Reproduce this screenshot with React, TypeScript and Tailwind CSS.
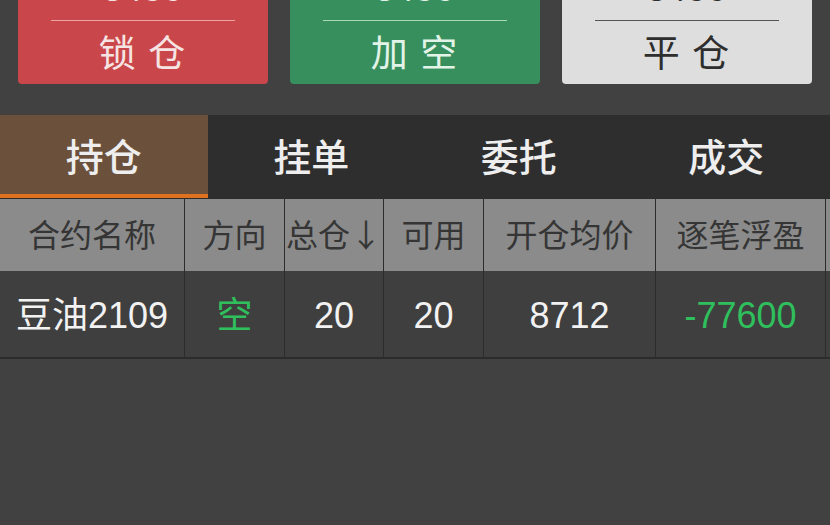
const font = { fontFamily: '"Noto Sans CJK SC", "Noto Sans", sans-serif' };
const numFont = { fontFamily: '"Liberation Sans", "Noto Sans CJK SC", sans-serif' };

const buttons = [
  { num: "3456", label: "锁 仓", bg: "bg-[#c9474a]", fg: "text-[#f6e4e4]", line: "bg-[#eea4a4]" },
  { num: "3456", label: "加 空", bg: "bg-[#388f5e]", fg: "text-[#e2f3e8]", line: "bg-[#a8d8b8]" },
  { num: "3456", label: "平 仓", bg: "bg-[#dedede]", fg: "text-[#2e2e2e]", line: "bg-[#555555]" },
];

const tabs = ["持仓", "挂单", "委托", "成交"];

const cols = [
  { head: "合约名称", w: "w-[185px]", val: "豆油2109", color: "text-[#f2f2f2]" },
  { head: "方向", w: "w-[100px]", val: "空", color: "text-[#2fbf5c]" },
  { head: "总仓↓", w: "w-[99px]", val: "20", color: "text-[#f2f2f2]" },
  { head: "可用", w: "w-[100px]", val: "20", color: "text-[#f2f2f2]" },
  { head: "开仓均价", w: "w-[172px]", val: "8712", color: "text-[#f2f2f2]" },
  { head: "逐笔浮盈", w: "w-[170px]", val: "-77600", color: "text-[#2fbf5c]" },
];

export default function App() {
  return (
    <div className="w-[830px] h-[525px] overflow-hidden bg-[#414141]" style={font}>
      <div className="flex gap-[22px] px-[18px] -mt-[40px]">
        {buttons.map((b, i) => (
          <div key={i} className={`w-[250px] h-[124px] rounded-[4px] ${b.bg} ${b.fg} flex flex-col items-center`}>
            <div className="h-[60px] flex items-end text-[34px] leading-none tracking-[1px] pb-[14px]" style={numFont}>
              {b.num}
            </div>
            <div className={`w-[184px] h-px ${b.line}`} />
            <div className="flex-1 flex items-center justify-center text-[37px] leading-none tracking-[2px] pb-[2px]">
              {b.label}
            </div>
          </div>
        ))}
      </div>

      <div className="mt-[31px] flex h-[83px] bg-[#2e2e2e]">
        {tabs.map((t, i) => (
          <div
            key={t}
            className={`flex-1 flex items-center justify-center text-[38px] font-medium text-[#eeeeee] border-b-[4px] ${
              i === 0 ? "bg-[#6b503b] border-[#e0711f]" : "border-[#2e2e2e]"
            }`}
          >
            {t}
          </div>
        ))}
      </div>

      <div className="flex">
        {cols.map((c, i) => (
          <div key={i} className={`${c.w} shrink-0 flex flex-col border-r border-[#2c2c2c]`}>
            <div className="h-[73px] flex items-center justify-center bg-[#8b8b8b] text-[#353535] text-[32px] leading-none border-t border-[#2c2c2c] pb-[4px]">
              {c.head}
            </div>
            <div
              className={`h-[88px] flex items-center justify-center bg-[#3f3f3f] text-[36px] leading-none ${c.color} border-b-2 border-[#2c2c2c] pt-[4px]`}
              style={numFont}
            >
              {c.val}
            </div>
          </div>
        ))}
        <div className="flex-1 flex flex-col">
          <div className="h-[73px] bg-[#8b8b8b] border-t border-[#2c2c2c]" />
          <div className="h-[88px] bg-[#3f3f3f] border-b-2 border-[#2c2c2c]" />
        </div>
      </div>
    </div>
  );
}
